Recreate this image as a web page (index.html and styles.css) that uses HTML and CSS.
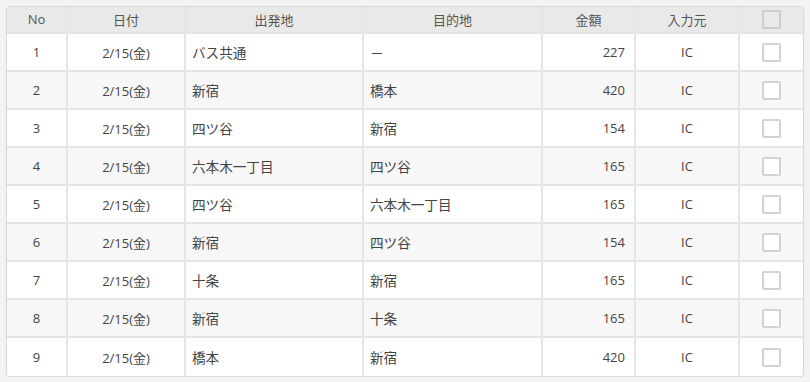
FILE: index.html
```html
<!DOCTYPE html>
<html lang="ja">
<head>
<meta charset="utf-8">
<title>交通費一覧</title>
<link rel="stylesheet" href="styles.css">
</head>
<body>
<div class="wrap">
<table class="grid">
  <colgroup>
    <col class="c-no"><col class="c-date"><col class="c-from"><col class="c-to"><col class="c-amt"><col class="c-src"><col class="c-chk">
  </colgroup>
  <thead>
    <tr><th>No</th><th>日付</th><th>出発地</th><th>目的地</th><th>金額</th><th>入力元</th><th><span class="cb cb-head"></span></th></tr>
  </thead>
  <tbody>
    <tr><td class="ctr">1</td><td class="ctr">2/15(金)</td><td class="place">バス共通</td><td class="place">－</td><td class="num">227</td><td class="ctr">IC</td><td class="ctr"><span class="cb"></span></td></tr>
    <tr><td class="ctr">2</td><td class="ctr">2/15(金)</td><td class="place">新宿</td><td class="place">橋本</td><td class="num">420</td><td class="ctr">IC</td><td class="ctr"><span class="cb"></span></td></tr>
    <tr><td class="ctr">3</td><td class="ctr">2/15(金)</td><td class="place">四ツ谷</td><td class="place">新宿</td><td class="num">154</td><td class="ctr">IC</td><td class="ctr"><span class="cb"></span></td></tr>
    <tr><td class="ctr">4</td><td class="ctr">2/15(金)</td><td class="place">六本木一丁目</td><td class="place">四ツ谷</td><td class="num">165</td><td class="ctr">IC</td><td class="ctr"><span class="cb"></span></td></tr>
    <tr><td class="ctr">5</td><td class="ctr">2/15(金)</td><td class="place">四ツ谷</td><td class="place">六本木一丁目</td><td class="num">165</td><td class="ctr">IC</td><td class="ctr"><span class="cb"></span></td></tr>
    <tr><td class="ctr">6</td><td class="ctr">2/15(金)</td><td class="place">新宿</td><td class="place">四ツ谷</td><td class="num">154</td><td class="ctr">IC</td><td class="ctr"><span class="cb"></span></td></tr>
    <tr><td class="ctr">7</td><td class="ctr">2/15(金)</td><td class="place">十条</td><td class="place">新宿</td><td class="num">165</td><td class="ctr">IC</td><td class="ctr"><span class="cb"></span></td></tr>
    <tr><td class="ctr">8</td><td class="ctr">2/15(金)</td><td class="place">新宿</td><td class="place">十条</td><td class="num">165</td><td class="ctr">IC</td><td class="ctr"><span class="cb"></span></td></tr>
    <tr><td class="ctr">9</td><td class="ctr">2/15(金)</td><td class="place">橋本</td><td class="place">新宿</td><td class="num">420</td><td class="ctr">IC</td><td class="ctr"><span class="cb"></span></td></tr>
  </tbody>
</table>
</div>
</body>
</html>
```
FILE: styles.css
```css
html, body {
  margin: 0;
  padding: 0;
  background: #f3f3f3;
}
body {
  padding: 6px 6px 0 6px;
  font-family: "Open Sans", "Noto Sans CJK JP", sans-serif;
  font-size: 13px;
  color: #444;
}
.wrap {
  width: 796px;
  border: 1px solid #d8d8d8;
  border-radius: 4px;
  overflow: hidden;
  background: #fff;
  box-shadow: 0 1px 2px rgba(0,0,0,0.08);
}
.grid {
  width: 100%;
  table-layout: fixed;
  border-collapse: separate;
  border-spacing: 0;
}
.c-no { width: 61px; }
.c-date { width: 118px; }
.c-from { width: 178px; }
.c-to { width: 179px; }
.c-amt { width: 93px; }
.c-src { width: 104px; }
.c-chk { width: auto; }
th, td {
  border-right: 2px solid #e6e6e6;
  border-bottom: 2px solid #e6e6e6;
  padding: 0 8px;
  white-space: nowrap;
  box-sizing: border-box;
}
th:last-child, td:last-child { border-right: none; }
tbody tr:last-child td { border-bottom: none; }
th {
  height: 27px;
  background: #e9e9e9;
  font-weight: normal;
  color: #555;
  text-align: center;
  padding-top: 0;
  padding-bottom: 1px;
}
td {
  height: 38px;
  background: #fff;
}
tbody tr:nth-child(even) td { background: #f7f7f7; }
.ctr { text-align: center; }
.place { font-size: 13.6px; padding-left: 6px; }
.num { text-align: right; padding-right: 9px; }
.cb {
  display: inline-block;
  width: 15px;
  height: 15px;
  border: 2px solid #d2d2d2;
  border-radius: 2px;
  background: #fff;
  vertical-align: middle;
}
.cb-head { background: #e9e9e9; border-color: #cdcdcd; }
```
